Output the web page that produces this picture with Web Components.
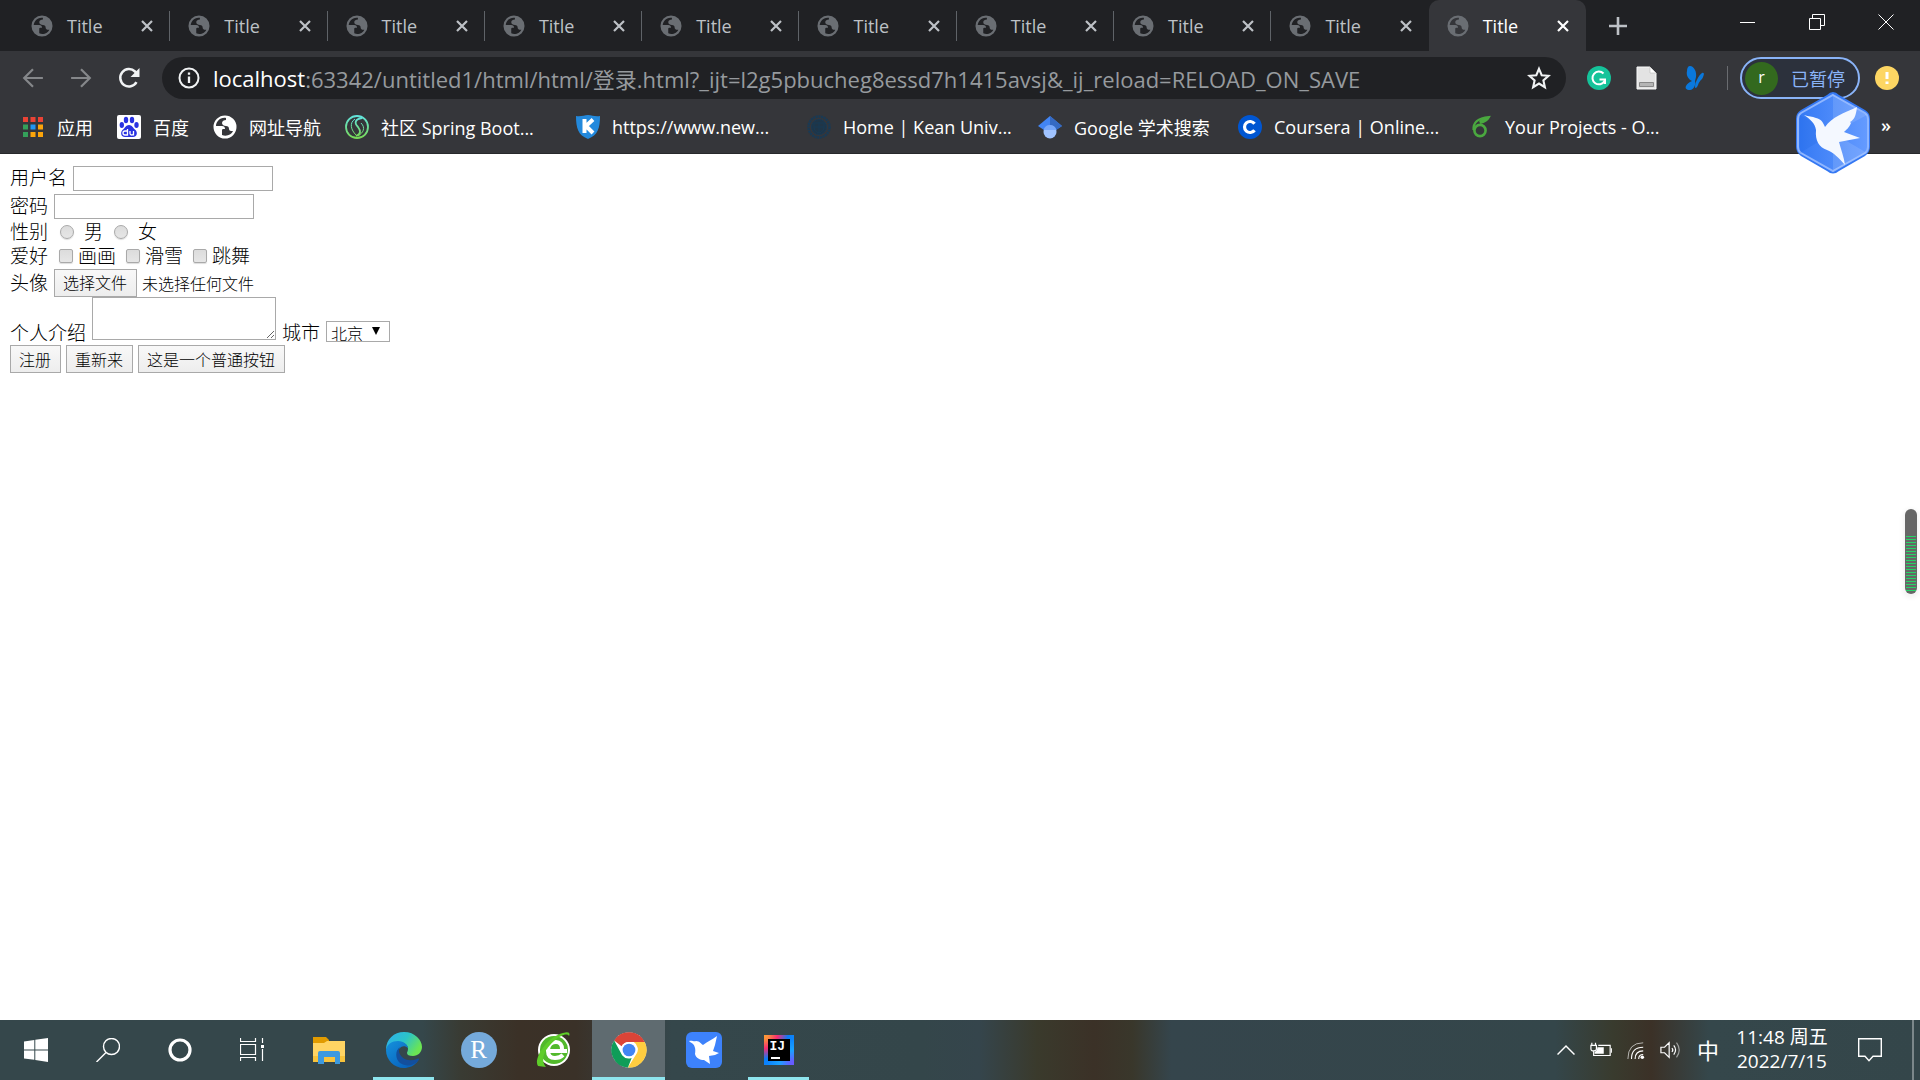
<!DOCTYPE html>
<html lang="zh-CN">
<head>
<meta charset="UTF-8">
<title>Title</title>
<style>
    body {
        margin: 0;
        font-family: "Open Sans", "Noto Sans CJK SC", sans-serif;
    }
</style>
</head>
<body>
<desktop-screen></desktop-screen>
<script>
const icons = {
    globe: ['0 0 24 24', '<path fill="currentColor" fill-rule="evenodd" d="M12 .5a11.500 11.500 0 1 0 0 23 11.500 11.500 0 1 0 0-23zM13 3C7 2 3 7 3 11h6c2 0 3 1 3 3h-2c-1 0-1 1-1 2v4c5 2 10-1 11-4h-2c-1 0-2-1-2-2 0-2-1-3-3-3-2 0-4-1-4-3s2-3 4-3z"/>'],
    close: ['0 0 14 14', '<path d="M2 2l10 10M12 2L2 12" fill="none" stroke="currentColor" stroke-width="2.2"/>'],
    plus: ['0 0 18 18', '<path d="M9 0v18M0 9h18" stroke="currentColor" stroke-width="2.6"/>'],
    minimize: ['0 0 16 16', '<path d="M0 8.5h15" stroke="currentColor" stroke-width="1"/>'],
    restore: ['0 0 16 16', '<path d="M.5 4.500h11v11H.5zM3.500 4.500v-4h12v11h-4" fill="none" stroke="currentColor"/>'],
    quit: ['0 0 16 16', '<path d="M.5.5l15 15M15.500.5l-15 15" stroke="currentColor"/>'],
    back: ['0 0 20 20', '<path d="M19 10H2M10 2L2 10l8 8" fill="none" stroke="currentColor" stroke-width="2"/>'],
    forward: ['0 0 20 20', '<path d="M1 10h17M10 2l8 8-8 8" fill="none" stroke="currentColor" stroke-width="2"/>'],
    reload: ['0 0 22 22', '<path d="M18.500 15.200A8.700 8.700 0 1 1 17 4.500l2 2" fill="none" stroke="currentColor" stroke-width="2.5"/><path d="M21.500 1v9h-9z" fill="currentColor"/>'],
    info: ['0 0 22 22', '<circle cx="11" cy="11" r="9.500" fill="none" stroke="currentColor" stroke-width="2"/><path d="M11 9.500V16M11 5.500v2.300" stroke="currentColor" stroke-width="2.300"/>'],
    star: ['0 0 24 24', '<path d="M12 2.800l2.700 6.400 6.900.6-5.200 4.600 1.500 6.800-5.900-3.600-5.900 3.600 1.500-6.800-5.200-4.600 6.900-.6z" fill="none" stroke="currentColor" stroke-width="2.100"/>'],
    grammarly: ['0 0 24 24', '<circle cx="12" cy="12" r="12" fill="#15c39a"/><path d="M16.500 7.500A6.400 6.400 0 1 0 17.500 15M12.500 13.500H18V18" fill="none" stroke="#fff" stroke-width="2"/>'],
    page: ['0 0 24 24', '<path d="M2 1h13l6 6v16H2z" fill="#e3e3e3" stroke="#fafafa"/><path d="M15 1v6h6z" fill="#fff" stroke="#bbb" stroke-width=".6"/><path d="M4.500 16.500h14v4h-14z" fill="#b5b5b5" stroke="#888"/>'],
    butterfly: ['0 0 24 24', '<path fill="#0a78dc" d="M7 0c4 0 7 6 6 11l-1 4c1 3-1 9-5 9-4 0-5-2-4-4 1-2 3-4 6-5C5 13 3 9 4 5c0-3 1-5 3-5zM19 7c3-1 2 3 0 6-2 2-3 3-4 6-1 3-3 4-3 2 0-5 4-12 7-14z"/>'],
    alert: ['0 0 24 24', '<circle cx="12" cy="12" r="12" fill="#fdd663"/><path d="M12 6v7M12 15.500V18" stroke="#fff" stroke-width="3"/>'],
    apps: ['0 0 24 24', '<g><path fill="#ea4335" d="M2 2h5v5H2zM9.500 2h5v5h-5zM17 2h5v5h-5z"/><path fill="#34a05a" d="M2 9.500h5v5H2zM2 17h5v5H2z"/><path fill="#2196f3" d="M9.500 9.500h5v5h-5z"/><path fill="#fba40a" d="M17 9.500h5v5h-5zM9.500 17h5v5h-5zM17 17h5v5h-5z"/></g>'],
    baidu: ['0 0 24 24', '<rect width="24" height="24" rx="2" fill="#fff"/><g fill="#2932e1"><ellipse cx="4.800" cy="10" rx="2.200" ry="3"/><ellipse cx="9" cy="5" rx="2.200" ry="3.200"/><ellipse cx="15" cy="5" rx="2.200" ry="3.200"/><ellipse cx="19.500" cy="10" rx="2.200" ry="3"/><path d="M12 10c3 0 4 3 6.500 5 2.500 2.500 1.500 7-2.500 7H8c-4 0-5-4.500-2.500-7C8 13 9 10 12 10z"/></g><path d="M10.500 14v6H8a1.800 1.800 0 0 1 0-4h2.500M13 16v2.500c0 2 3.500 2 3.500 0V16M16.500 16v4.500" fill="none" stroke="#fff" stroke-width="1.300"/>'],
    spring: ['0 0 24 24', '<defs><linearGradient id="s" x2="0" y2="1"><stop stop-color="#62e4dc"/><stop offset="1" stop-color="#78d957"/></linearGradient></defs><g fill="none" stroke="url(#s)"><circle cx="12" cy="12" r="11" stroke-width="1.800"/><path d="M17 3C10 4 9 8 13 12c3 4 3 7-2 9" stroke-width="1.800"/><path d="M10 4C4 8 6 15 11 20M16 8c5 5 2 10-3 13" stroke-width="1"/></g>'],
    shield: ['0 0 24 24', '<path d="M0 1c5 1 8-1 12-1s7 2 12 1c0 12-2 19-12 23C2 20 0 13 0 1z" fill="#2389dc"/><path d="M8.500 4v14M17 4.500l-7 6.500 7 7" fill="none" stroke="#fff" stroke-width="4"/>'],
    seal: ['0 0 24 24', '<g fill="none" stroke="#193a55"><circle cx="12" cy="12" r="10.500" stroke-width="2.500" stroke-dasharray="2 .7"/><circle cx="12" cy="12" r="7.500" fill="#1f3547"/><path d="M7 8h10v4c0 3-2 5-5 6-3-1-5-3-5-6zM12 7v11M7 12h10"/></g>'],
    scholar: ['0 0 24 24', '<path d="M12 1L0 11l6 4h12l6-4z" fill="#4285f4"/><path d="M12 1l12 10-6 4-6-5z" fill="#356ac3"/><circle cx="12" cy="17" r="6.500" fill="#a0c3ff"/><path d="M5.700 15a6.500 6.500 0 0 1 12.600 0z" fill="#76a7fa"/>'],
    coursera: ['0 0 24 24', '<circle cx="12" cy="12" r="12" fill="#0056d2"/><path d="M16.500 8.800a5.500 5.500 0 1 0 0 6.400" fill="none" stroke="#fff" stroke-width="3.200"/>'],
    overleaf: ['0 0 24 24', '<circle cx="11" cy="15.500" r="5.600" fill="none" stroke="#4aa83f" stroke-width="2.600"/><path d="M4.500 15C4 8 9 3 20 2c-2 4-5 5-9 6" fill="none" stroke="#4aa83f" stroke-width="2.200"/><path d="M10 6c2-3 6-4 10-4-2 4-5 5-9 6z" fill="#4aa83f"/>'],
    bird: ['0 0 36 36', '<path fill="#fff" d="M3 9c3-1 5 1 7 0 4 0 5 3 7 4C22 9 26 8 31 4l-2 9-2 6 6 2-4 2-6 1 1 8-6-4c-4 0-8-2-9-6 1-5 0-10-5-12z"/>'],
    hexbird: ['0 0 76 84', '<defs><linearGradient id="h"><stop stop-color="#3479f4"/><stop offset="1" stop-color="#659bff"/></linearGradient></defs><path d="M38 1Q41 1 44 4L70 19Q75 22 75 28V56Q75 61 70 65L44 80Q38 85 32 80L6 65Q1 61 1 56V28Q1 22 6 19L32 4Q35 1 38 1z" fill="#3478f3"/><path d="M38 4L70 22q3 2 3 6v28q0 4-3 6L38 80 6 62q-3-2-3-6V28q0-4 3-6z" fill="url(#h)" stroke="#8fb6ff" stroke-width="2"/><path d="M38 42V4l34 20zM38 42l34 20L38 80z" fill="#fff" opacity=".12"/><path d="M38 42L5 62V24z" fill="#0b54da" opacity=".15"/><path d="M9 24c5 2 8 1 12 3 5 1 7 4 9 9 7-10 19-14 32-20-1 9-3 13-7 15l1 1c-2 5-5 7-7 9l16 6-21 4c2 8 5 15 6 23-6-7-12-13-18-15-8-3-12-9-11-20-1-7-6-11-12-15z" fill="#f4f8ff"/>'],
    windows: ['0 0 24 24', '<path fill="#fff" d="M0 3.500L10.300 2v9.400H0zM11.300 1.800L24 0v11.400H11.300zM0 12.400h10.300v9.400L0 20.500zM11.300 12.400H24V24l-12.700-1.900z"/>'],
    search: ['0 0 24 24', '<g fill="none" stroke="#fff" stroke-width="1.400"><circle cx="15.500" cy="8.500" r="8"/><path d="M10 14.500L.5 24"/></g>'],
    cortana: ['0 0 24 24', '<circle cx="12" cy="12" r="10" fill="none" stroke="#fff" stroke-width="3.200"/>'],
    taskview: ['0 0 24 24', '<g fill="none" stroke="#fff" stroke-width="1.200"><path d="M.5 0v3.500h15V0M.5 6.500h15v10H.5zM.5 23v-3.500h15V23M22.500 0v5M22.500 11v12"/></g><path fill="#fff" d="M21 7h3v3h-3z"/>'],
    folder: ['0 0 32 32', '<path d="M0 3h13l3 3v5H0z" fill="#e19b00"/><path d="M0 9h11l3-2h18v21H0z" fill="#ffd463"/><path d="M0 22h32v6H0z" fill="#f8c33b"/><path d="M5 30V19q0-2 2-2h18q2 0 2 2v11h-5v-7H11v7z" fill="#3c99df"/>'],
    edge: ['0 0 36 36', '<defs><linearGradient id="e" x2="1" y2=".5"><stop stop-color="#2eaef0"/><stop offset=".55" stop-color="#2bc4c8"/><stop offset="1" stop-color="#6be553"/></linearGradient><linearGradient id="f" x2="1" y2="1"><stop stop-color="#1591dc"/><stop offset="1" stop-color="#0558b5"/></linearGradient></defs><path d="M0 18C0 7 8 0 18 0c11 0 18 8 18 15 0 5-4 9-9 9-4 0-6-1-6-3 0-1 1-2 1-4 0-4-4-7-9-7-6 0-11 4-13 8z" fill="url(#e)"/><path d="M0 18C1 12 6 9 12 9c6 0 10 4 10 7-5-4-10 0-10 5 0 8 9 14 20 8-4 5-9 7-14 7C8 36 0 28 0 18z" fill="url(#f)"/><path d="M14 15c-5 3-5 12 0 16 6 4 13 3 18-2 2-2 1-3-1-2-5 2-11 2-15-2-3-3-4-7-2-10z" fill="#134f9d"/>'],
    greene: ['0 0 36 36', '<circle cx="18" cy="18" r="16" fill="#fff"/><circle cx="18" cy="18" r="14" fill="#52b92b"/><path d="M31 19H12c0 5 3 7 7 7 3 0 6-1 8-3M12 17c1-5 4-7 8-7s6 3 6 7" fill="none" stroke="#fff" stroke-width="4"/><path d="M2 34C-3 28 10 5 27 1c7-2 7 1 6 3-2-3-8-1-15 5C8 18 4 28 10 35z" fill="#5ecd29"/>'],
    chrome: ['0 0 34 34', '<circle cx="17" cy="17" r="16.500" fill="#fff"/><path d="M3 8A16.500 16.500 0 0 1 31.800 9.500H17a8 8 0 0 0-7 4z" fill="#db4437"/><path d="M31.800 9.500A16.500 16.500 0 0 1 16 33.500l7.500-12a8 8 0 0 0-2-12z" fill="#ffcd40"/><path d="M3 8l7.500 14a8 8 0 0 0 9 2.500L16 33.500A16.500 16.500 0 0 1 3 8z" fill="#0f9d58"/><circle cx="17" cy="17" r="7.600" fill="#fff"/><circle cx="17" cy="17" r="6" fill="#4285f4"/>'],
    up: ['0 0 18 10', '<path d="M.5 9.500L9 1l8.500 8.500" fill="none" stroke="#fff" stroke-width="1.500"/>'],
    battery: ['0 0 24 18', '<g fill="none" stroke="#fff" stroke-width="1.300"><path d="M9 4h13v11H4v-3M1 4h6v4q0 2-3 2T1 8zM2 4V1M6 4V1M4 10v5"/></g><path fill="#fff" d="M8 6h7v7H5v-2q3-1 3-5zM23 7h1v5h-1z"/>'],
    wifi: ['0 0 20 20', '<g fill="none" stroke="#fff"><path d="M1 20Q1 2 18 2" opacity=".7"/><path d="M5 20Q5 7 18 7M9 20q0-9 9-9M13 20q0-5 5-5" stroke-width="1.200"/></g><circle cx="17" cy="18" r="2" fill="#fff"/>'],
    sound: ['0 0 24 20', '<g fill="none" stroke="#fff" stroke-width="1.300"><path d="M1 7h4l5-5v16l-5-5H1zM13 8q2 2 0 4M15 5q4 5 0 10"/><path d="M18 2q6 8 0 16" opacity=".5"/></g>'],
    note: ['0 0 24 24', '<path d="M.7.7h22.600v17.600H15l-4 4.500-4-4.500H.7z" fill="none" stroke="#fff" stroke-width="1.400"/>']
};

class UiIcon extends HTMLElement {
    connectedCallback() {
        if (this.shadowRoot) return;
        const [box, shapes] = icons[this.getAttribute('name')];
        this.attachShadow({ mode: 'open' }).innerHTML = `
            <style>
                :host {
                    display: inline-flex;
                    flex: none;
                    width: var(--icon, 24px);
                    height: var(--icon, 24px);
                }
                svg {
                    width: 100%;
                    height: 100%;
                }
            </style>
            <svg viewBox="${box}" aria-hidden="true">${shapes}</svg>
        `;
    }
}

class BrowserTab extends HTMLElement {
    constructor() {
        super();
        this.attachShadow({ mode: 'open' }).innerHTML = `
            <style>
                :host {
                    display: flex;
                    flex: 1;
                    align-items: center;
                    box-sizing: border-box;
                    padding: 0 16px 0 18px;
                    color: #bdc1c6;
                    font-size: 18px;
                    background: linear-gradient(#5f6368, #5f6368) right 0 top 11px / 1px 30px no-repeat;
                }
                :host([last]) {
                    background: none;
                }
                :host([active]) {
                    background: #35363a;
                    border-radius: 10px 10px 0 0;
                    color: #fff;
                }
                .icon {
                    --icon: 22px;
                    color: #6a6e73;
                    margin-right: 14px;
                }
                .title {
                    flex: 1;
                }
                button {
                    display: flex;
                    padding: 0;
                    border: none;
                    background: none;
                    color: inherit;
                    --icon: 14px;
                }
            </style>
            <ui-icon class="icon" name="globe"></ui-icon>
            <span class="title"><slot></slot></span>
            <button aria-label="关闭"><ui-icon name="close"></ui-icon></button>
        `;
    }
}

class TabStrip extends HTMLElement {
    constructor() {
        super();
        let tabs = '';
        for (let i = 0; i < 10; i++) {
            tabs += `<browser-tab ${i === 9 ? 'active' : ''} ${i === 8 ? 'last' : ''}>Title</browser-tab>`;
        }
        this.attachShadow({ mode: 'open' }).innerHTML = `
            <style>
                :host {
                    display: flex;
                    height: 51px;
                    background: #202124;
                    color: #fff;
                }
                .tabs {
                    display: flex;
                    flex: 0 1 1573px;
                    padding-left: 13px;
                }
                button {
                    display: flex;
                    align-items: center;
                    justify-content: center;
                    padding: 0;
                    border: none;
                    background: none;
                    color: inherit;
                }
                .new {
                    width: 64px;
                    color: #bdc1c6;
                    --icon: 18px;
                }
                .window {
                    display: flex;
                    margin-left: auto;
                    height: 43px;
                    --icon: 16px;
                }
                .window button {
                    width: 69px;
                }
            </style>
            <div class="tabs">${tabs}</div>
            <button class="new" aria-label="新标签页"><ui-icon name="plus"></ui-icon></button>
            <div class="window">
                <button aria-label="最小化"><ui-icon name="minimize"></ui-icon></button>
                <button aria-label="还原"><ui-icon name="restore"></ui-icon></button>
                <button aria-label="关闭"><ui-icon name="quit"></ui-icon></button>
            </div>
        `;
    }
}

class AddressBar extends HTMLElement {
    constructor() {
        super();
        this.attachShadow({ mode: 'open' }).innerHTML = `
            <style>
                :host {
                    display: flex;
                    align-items: center;
                    height: 54px;
                    padding: 0 21px 0 22px;
                    background: #35363a;
                    color: #f1f3f4;
                }
                button {
                    display: flex;
                    align-items: center;
                    padding: 0;
                    border: none;
                    background: none;
                    color: inherit;
                    font: inherit;
                }
                .nav {
                    display: flex;
                    gap: 26px;
                    --icon: 22px;
                }
                .nav button:disabled {
                    color: #85878a;
                }
                .url {
                    display: flex;
                    flex: 1;
                    align-items: center;
                    height: 42px;
                    margin: 0 21px 0 22px;
                    padding: 0 15px 0 16px;
                    border-radius: 21px;
                    background: #202124;
                    font-size: 22px;
                }
                .url label {
                    margin-left: 13px;
                    color: #fff;
                }
                .url input {
                    flex: 1;
                    min-width: 0;
                    padding: 0;
                    border: none;
                    outline: none;
                    background: none;
                    color: #969a9e;
                    font: inherit;
                }
                .info {
                    --icon: 22px;
                }
                .extensions {
                    display: flex;
                    align-items: center;
                    gap: 24px;
                }
                .line {
                    width: 1px;
                    height: 24px;
                    background: #6a6c70;
                }
                .extensions button + .line {
                    margin-left: -4px;
                }
                .profile {
                    box-sizing: border-box;
                    height: 42px;
                    gap: 13px;
                    margin: 0 15px 0 12px;
                    padding: 0 13px 0 3px;
                    border: 2px solid #8ab4f8;
                    border-radius: 21px;
                    background: #2c313c;
                    color: #8ab4f8;
                    font-size: 18px;
                }
                .avatar {
                    width: 33px;
                    height: 33px;
                    border-radius: 50%;
                    background: #33691e;
                    color: #fff;
                    font-size: 16px;
                    line-height: 31px;
                    text-align: center;
                }
            </style>
            <div class="nav">
                <button disabled aria-label="后退"><ui-icon name="back"></ui-icon></button>
                <button disabled aria-label="前进"><ui-icon name="forward"></ui-icon></button>
                <button aria-label="重新加载"><ui-icon name="reload"></ui-icon></button>
            </div>
            <div class="url">
                <ui-icon class="info" name="info"></ui-icon>
                <label for="url">localhost</label>
                <input type="text" id="url" spellcheck="false" value=":63342/untitled1/html/html/登录.html?_ijt=l2g5pbucheg8essd7h1415avsj&amp;_ij_reload=RELOAD_ON_SAVE">
                <button aria-label="收藏"><ui-icon name="star"></ui-icon></button>
            </div>
            <div class="extensions">
                <button aria-label="Grammarly"><ui-icon name="grammarly"></ui-icon></button>
                <button aria-label="文档"><ui-icon name="page"></ui-icon></button>
                <button aria-label="扩展"><ui-icon name="butterfly"></ui-icon></button>
                <span class="line"></span>
            </div>
            <button class="profile"><span class="avatar">r</span>已暂停</button>
            <button aria-label="更新"><ui-icon name="alert"></ui-icon></button>
        `;
    }
}

class BookmarkItem extends HTMLElement {
    constructor() {
        super();
        this.attachShadow({ mode: 'open' }).innerHTML = `
            <style>
                :host {
                    display: block;
                }
                a {
                    display: flex;
                    align-items: center;
                    gap: 12px;
                    color: #fff;
                    text-decoration: none;
                    white-space: nowrap;
                }
                :host([medium]) span {
                    width: 140px;
                }
                :host([long]) span {
                    width: 171px;
                }
            </style>
            <a href="#"><ui-icon name="${this.getAttribute('icon')}"></ui-icon><span><slot></slot></span></a>
        `;
    }
}

class BookmarkBar extends HTMLElement {
    constructor() {
        super();
        this.attachShadow({ mode: 'open' }).innerHTML = `
            <style>
                :host {
                    display: flex;
                    align-items: center;
                    gap: 24px;
                    box-sizing: border-box;
                    height: 49px;
                    padding: 0 29px 5px 21px;
                    border-bottom: 1px solid #27282b;
                    background: #35363a;
                    color: #f1f3f4;
                    font-size: 18px;
                }
                button {
                    margin-left: auto;
                    padding: 0 0 4px;
                    border: none;
                    background: none;
                    color: #fff;
                    font: inherit;
                    font-weight: 600;
                }
            </style>
            <bookmark-item icon="apps">应用</bookmark-item>
            <bookmark-item icon="baidu">百度</bookmark-item>
            <bookmark-item icon="globe">网址导航</bookmark-item>
            <bookmark-item icon="spring" long>社区 Spring Boot...</bookmark-item>
            <bookmark-item icon="shield" long>https://www.new...</bookmark-item>
            <bookmark-item icon="seal" long>Home | Kean Univ...</bookmark-item>
            <bookmark-item icon="scholar" medium>Google 学术搜索</bookmark-item>
            <bookmark-item icon="coursera" long>Coursera | Online...</bookmark-item>
            <bookmark-item icon="overleaf" long>Your Projects - O...</bookmark-item>
            <button>»</button>
        `;
    }
}

class LoginForm extends HTMLElement {
    constructor() {
        super();
        this.attachShadow({ mode: 'open' }).innerHTML = `
            <style>
                :host {
                    display: block;
                    padding: 10px;
                    color: #000;
                    font-family: "Noto Sans CJK SC", sans-serif;
                    font-size: 19px;
                    font-weight: 300;
                    line-height: 22px;
                }
                .row {
                    display: flex;
                    align-items: center;
                    gap: 5px;
                    min-height: 28px;
                }
                .tight {
                    min-height: 24px;
                }
                .file {
                    min-height: 29px;
                }
                .intro {
                    align-items: flex-end;
                    min-height: 48px;
                }
                label, .lead {
                    padding-bottom: 2px;
                }
                .lead {
                    margin-right: 1px;
                }
                input, textarea, select, button {
                    box-sizing: border-box;
                    margin: 0;
                    border: 1px solid #a9a9a9;
                    background: #fff;
                    font-family: inherit;
                    font-size: 16px;
                    font-weight: inherit;
                }
                input[type="text"], input[type="password"] {
                    width: 200px;
                    height: 25px;
                }
                input[type="radio"], input[type="checkbox"] {
                    appearance: none;
                    width: 14px;
                    height: 14px;
                    border-radius: 2px;
                    background: linear-gradient(#dcdcdc, #e6e6e6);
                    box-shadow: 0 1px 1px #ddd;
                }
                input[type="radio"] {
                    margin: 0 5px 0 6px;
                    border-radius: 50%;
                }
                input[type="checkbox"] {
                    margin-left: 5px;
                }
                input[type="checkbox"]:checked, input[type="radio"]:checked {
                    background: #555;
                }
                textarea {
                    align-self: flex-start;
                    width: 184px;
                    height: 43px;
                    margin-right: 1px;
                    resize: both;
                }
                select {
                    appearance: none;
                    width: 64px;
                    height: 21px;
                    margin: 0 0 3px 1px;
                    padding: 0 4px;
                    line-height: 22px;
                    color: #000;
                    background: #fff url("data:image/svg+xml,%3Csvg xmlns='http://www.w3.org/2000/svg' viewBox='0 0 8 8'%3E%3Cpath d='M0 0h8L4 8z'/%3E%3C/svg%3E") right 9px top 5px / 8px 8px no-repeat;
                }
                button {
                    height: 28px;
                    padding: 0 9px 1px 8px;
                    line-height: 24px;
                    color: #000;
                    background: linear-gradient(#f8f8f8, #ededed);
                }
                .status {
                    font-size: 16px;
                }
            </style>
            <form>
                <div class="row"><label class="lead" for="user">用户名</label><input type="text" id="user"></div>
                <div class="row"><label class="lead" for="password">密码</label><input type="password" id="password"></div>
                <div class="row tight">
                    <span class="lead">性别</span>
                    <input type="radio" name="sex" id="male"><label for="male">男</label>
                    <input type="radio" name="sex" id="female"><label for="female">女</label>
                </div>
                <div class="row tight">
                    <span class="lead">爱好</span>
                    <input type="checkbox" id="draw"><label for="draw">画画</label>
                    <input type="checkbox" id="ski"><label for="ski">滑雪</label>
                    <input type="checkbox" id="dance"><label for="dance">跳舞</label>
                </div>
                <div class="row file">
                    <label class="lead" for="avatar">头像</label>
                    <input type="file" id="avatar" hidden>
                    <button type="button" class="pick">选择文件</button>
                    <span class="status">未选择任何文件</span>
                </div>
                <div class="row intro">
                    <label class="lead" for="intro">个人介绍</label><textarea id="intro"></textarea>
                    <label for="city">城市</label>
                    <select id="city"><option>北京</option></select>
                </div>
                <div class="row">
                    <button type="submit">注册</button>
                    <button type="reset">重新来</button>
                    <button type="button">这是一个普通按钮</button>
                </div>
            </form>
        `;
        this.shadowRoot.querySelector('.pick').addEventListener('click', this.pickFile.bind(this));
        this.shadowRoot.querySelector('form').addEventListener('submit', event => event.preventDefault());
    }

    pickFile() {
        this.shadowRoot.querySelector('#avatar').click();
    }
}

class TaskButton extends HTMLElement {
    constructor() {
        super();
        this.attachShadow({ mode: 'open' }).innerHTML = `
            <style>
                :host {
                    display: flex;
                    width: 73px;
                    --icon: 36px;
                }
                :host([system]) {
                    width: 72px;
                    --icon: 24px;
                }
                :host([open]) {
                    background: linear-gradient(#8ee5ee, #8ee5ee) center bottom / 61px 3px no-repeat;
                }
                :host([active]) {
                    background: linear-gradient(#8ee5ee, #8ee5ee) bottom / 100% 3px no-repeat #5f6b70;
                }
                button {
                    flex: 1;
                    display: flex;
                    align-items: center;
                    justify-content: center;
                    padding: 0;
                    border: none;
                    background: none;
                    color: #fff;
                }
            </style>
            <button><slot></slot></button>
        `;
    }
}

class TaskBar extends HTMLElement {
    constructor() {
        super();
        this.attachShadow({ mode: 'open' }).innerHTML = `
            <style>
                :host {
                    display: flex;
                    height: 60px;
                    color: #fff;
                    background: linear-gradient(90deg, #35474b 0, #35474b 22%, #393b33 24%, #3b3127 27%, #3a3128 30%, #35474b 35%, #34464a 48%, #35454c 51%, #3a3a2c 54%, #3b3127 57%, #39372b 59%, #35454c 61%, #34464a 81%, #393b2e 84%, #3b3127 86%, #35474b 89%, #34464a 100%);
                }
                .apps {
                    display: flex;
                    gap: 2px;
                    padding-left: 4px;
                }
                .folder {
                    --icon: 32px;
                }
                .r {
                    width: 36px;
                    height: 36px;
                    border-radius: 50%;
                    background: #75aadb;
                    font: 25px/35px "Liberation Serif", serif;
                    text-align: center;
                }
                .bird {
                    display: flex;
                    border-radius: 6px;
                    background: #3d82fb;
                }
                .ij {
                    box-sizing: border-box;
                    width: 30px;
                    height: 30px;
                    border: 4px solid;
                    border-image: linear-gradient(135deg, #fc9a35, #f72c72 22%, #087cfa 45%, #1aa2ff 75%, #6b57ff) 1;
                    background: linear-gradient(#fff, #fff) 3px 18px / 9px 2px no-repeat #000;
                    font: bold 13px/15px "Liberation Mono", monospace;
                    text-align: left;
                    padding-left: 2px;
                }
                .tray {
                    display: flex;
                    align-items: center;
                    gap: 15px;
                    margin-left: auto;
                }
                .tray button {
                    display: flex;
                    padding: 0;
                    border: none;
                    background: none;
                    color: inherit;
                    font: inherit;
                    --icon: 22px;
                }
                .tray .small {
                    --icon: 18px;
                }
                .tray .ime {
                    padding-bottom: 2px;
                    font-size: 22px;
                }
                .clock {
                    width: 96px;
                    padding-bottom: 2px;
                    font-size: 19px;
                    line-height: 24px;
                    text-align: center;
                }
                .tray .note {
                    --icon: 24px;
                    margin: 0 15px 0 13px;
                }
                .edge {
                    width: 6px;
                    height: 60px;
                    border-left: 2px solid #7b878a;
                }
            </style>
            <task-button system><ui-icon name="windows"></ui-icon></task-button>
            <task-button system><ui-icon name="search"></ui-icon></task-button>
            <task-button system><ui-icon name="cortana"></ui-icon></task-button>
            <task-button system><ui-icon name="taskview"></ui-icon></task-button>
            <div class="apps">
                <task-button><ui-icon class="folder" name="folder"></ui-icon></task-button>
                <task-button open><ui-icon name="edge"></ui-icon></task-button>
                <task-button><div class="r">R</div></task-button>
                <task-button><ui-icon name="greene"></ui-icon></task-button>
                <task-button active><ui-icon name="chrome"></ui-icon></task-button>
                <task-button><div class="bird"><ui-icon name="bird"></ui-icon></div></task-button>
                <task-button open><div class="ij">IJ</div></task-button>
            </div>
            <div class="tray">
                <button class="small" aria-label="显示隐藏的图标"><ui-icon name="up"></ui-icon></button>
                <button aria-label="电池"><ui-icon name="battery"></ui-icon></button>
                <button class="small" aria-label="网络"><ui-icon name="wifi"></ui-icon></button>
                <button aria-label="音量"><ui-icon name="sound"></ui-icon></button>
                <button class="ime">中</button>
                <div class="clock">11:48 周五<br>2022/7/15</div>
                <button class="note" aria-label="通知"><ui-icon name="note"></ui-icon></button>
                <span class="edge"></span>
            </div>
        `;
    }
}

class DesktopScreen extends HTMLElement {
    constructor() {
        super();
        this.attachShadow({ mode: 'open' }).innerHTML = `
            <style>
                :host {
                    display: flex;
                    flex-direction: column;
                    position: relative;
                    min-height: 100vh;
                    background: #fff;
                }
                login-form {
                    flex: 1;
                }
                /* floating widgets above the browser window */
                .assistant {
                    position: absolute;
                    top: 91px;
                    right: 49px;
                    width: 76px;
                    height: 84px;
                }
                .meter {
                    position: absolute;
                    top: 509px;
                    right: 3px;
                    box-sizing: border-box;
                    width: 12px;
                    height: 85px;
                    padding: 27px 1px 3px;
                    border-radius: 6px;
                    background: #666;
                    box-shadow: 0 2px 5px 2px #f2f2f2;
                }
                .meter::before {
                    content: "";
                    display: block;
                    height: 100%;
                    background: repeating-linear-gradient(#25d366 0 1px, transparent 1px 3px);
                }
            </style>
            <tab-strip></tab-strip>
            <address-bar></address-bar>
            <bookmark-bar></bookmark-bar>
            <login-form></login-form>
            <task-bar></task-bar>
            <ui-icon class="assistant" name="hexbird"></ui-icon>
            <div class="meter"></div>
        `;
    }
}

customElements.define('ui-icon', UiIcon);
customElements.define('browser-tab', BrowserTab);
customElements.define('tab-strip', TabStrip);
customElements.define('address-bar', AddressBar);
customElements.define('bookmark-item', BookmarkItem);
customElements.define('bookmark-bar', BookmarkBar);
customElements.define('login-form', LoginForm);
customElements.define('task-button', TaskButton);
customElements.define('task-bar', TaskBar);
customElements.define('desktop-screen', DesktopScreen);
</script>
</body>
</html>
